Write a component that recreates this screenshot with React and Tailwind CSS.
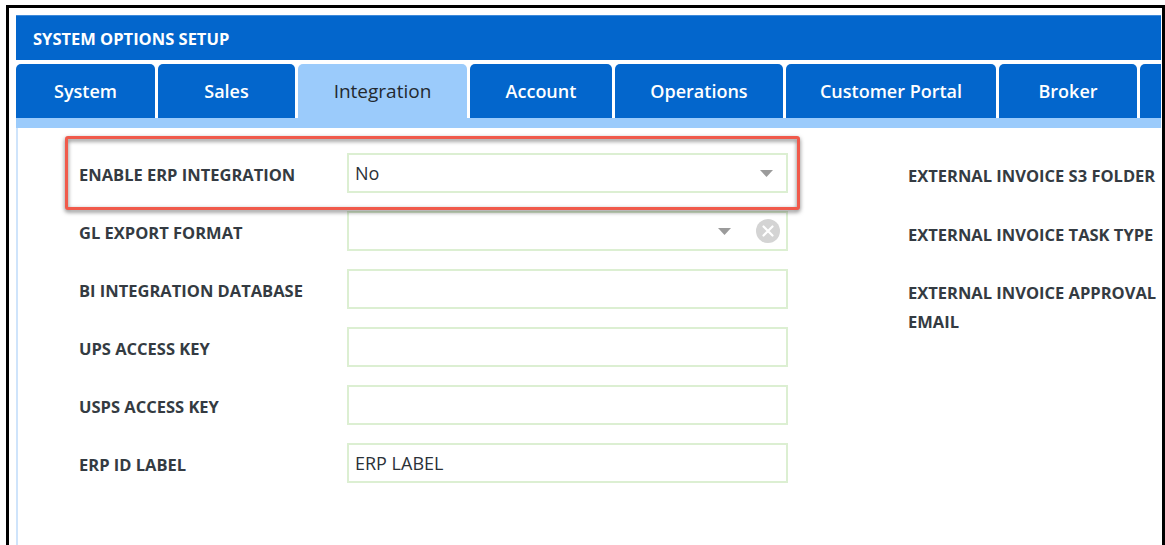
import React from "react";

const tabs = [
  { name: "System", w: "w-[139px]" },
  { name: "Sales", w: "w-[137px]" },
  { name: "Integration", w: "w-[169px]", active: true },
  { name: "Account", w: "w-[142px]" },
  { name: "Operations", w: "w-[168px]" },
  { name: "Customer Portal", w: "w-[210px]" },
  { name: "Broker", w: "w-[138px]" },
  { name: "", w: "w-[140px]" },
];

const leftFields = [
  { label: "ENABLE ERP INTEGRATION", type: "select", value: "No" },
  { label: "GL EXPORT FORMAT", type: "select-clear", value: "" },
  { label: "BI INTEGRATION DATABASE", type: "text", value: "" },
  { label: "UPS ACCESS KEY", type: "text", value: "" },
  { label: "USPS ACCESS KEY", type: "text", value: "" },
  { label: "ERP ID LABEL", type: "text", value: "ERP LABEL" },
];

const rightFields = [
  "EXTERNAL INVOICE S3 FOLDER",
  "EXTERNAL INVOICE TASK TYPE",
  "EXTERNAL INVOICE APPROVAL EMAIL",
];

const Caret = () => (
  <svg width="13" height="7" viewBox="0 0 13 7">
    <polygon points="0,0 13,0 6.5,7" fill="#9b9b9b" />
  </svg>
);

const ClearIcon = () => (
  <svg width="24" height="24" viewBox="0 0 24 24">
    <circle cx="12" cy="12" r="12" fill="#d4d4d4" />
    <path d="M7.5 7.5 L16.5 16.5 M16.5 7.5 L7.5 16.5" stroke="#fff" strokeWidth="2.2" strokeLinecap="round" />
  </svg>
);

const Field = ({ field }) => (
  <div className="flex items-center h-[40px] mb-[18px]">
    <div className="w-[268px] shrink-0 pt-[4px] text-[16.5px] font-bold text-[#343b42]">{field.label}</div>
    <div className="w-[441px] h-[40px] shrink-0 border-2 border-[#dcefd2] bg-white flex items-center pl-[6px] pr-[13px]">
      <span className="flex-1 text-[18px] text-[#2b3138]">{field.value}</span>
      {field.type === "select" && <Caret />}
      {field.type === "select-clear" && (
        <div className="flex items-center gap-[25px] -mr-[7px]">
          <Caret />
          <ClearIcon />
        </div>
      )}
    </div>
  </div>
);

const App = () => {
  return (
    <div className="w-[1165px] h-[545px] bg-white overflow-hidden pl-[6px] pt-[5px]" style={{ fontFamily: '"Open Sans", "Noto Sans", sans-serif' }}>
      <div className="relative w-[1159px] h-[560px] border-[3px] border-b-0 border-black pt-[7px] pl-[7px] pr-[1px]">
        <div className="h-full overflow-hidden flex flex-col">
          {/* title bar */}
          <div className="h-[45px] shrink-0 bg-[#0366cc] border-t border-[#3f8ad9] flex items-center px-[17px] pt-[2px]">
            <span className="text-white text-[16.5px] font-bold">SYSTEM OPTIONS SETUP</span>
          </div>

          {/* tab strip */}
          <div className="flex gap-[3px] mt-[4px] h-[54px] shrink-0">
            {tabs.map((t, i) => (
              <div
                key={i}
                className={`${t.w} shrink-0 rounded-t-[5px] flex items-center justify-center ${
                  t.active ? "bg-[#9bcbfb] text-[#23292f] text-[19px]" : "bg-[#0366cc] text-white font-semibold text-[18px]"
                }`}
              >
                {t.name}
              </div>
            ))}
          </div>
          <div className="h-[10px] shrink-0 bg-[#9bcbfb]" />

          {/* form body */}
          <div className="flex-1 flex bg-white border-l-2 border-[#cfe4fb]">
            <div className="pl-[61px] pt-[25px] shrink-0">
              {leftFields.map((f) => (
                <Field key={f.label} field={f} />
              ))}
            </div>
            <div className="ml-[120px] pt-[33px] shrink-0">
              {rightFields.map((label) => (
                <div key={label} className="flex min-h-[58.5px]">
                  <div className="w-[262px] shrink-0 text-[16.5px] font-bold text-[#343b42] leading-[29px]">{label}</div>
                  <div className="w-[441px] h-[40px] shrink-0 border-2 border-[#dcefd2]" />
                </div>
              ))}
            </div>
          </div>
        </div>

        {/* highlight around the ERP toggle */}
        <div className="absolute left-[56px] top-[128px] w-[735px] h-[74px] border-[3px] border-[#f05a4b] rounded-[3px] drop-shadow-[0_2px_2px_rgba(0,0,0,0.55)]" />
      </div>
    </div>
  );
};

export default App;
